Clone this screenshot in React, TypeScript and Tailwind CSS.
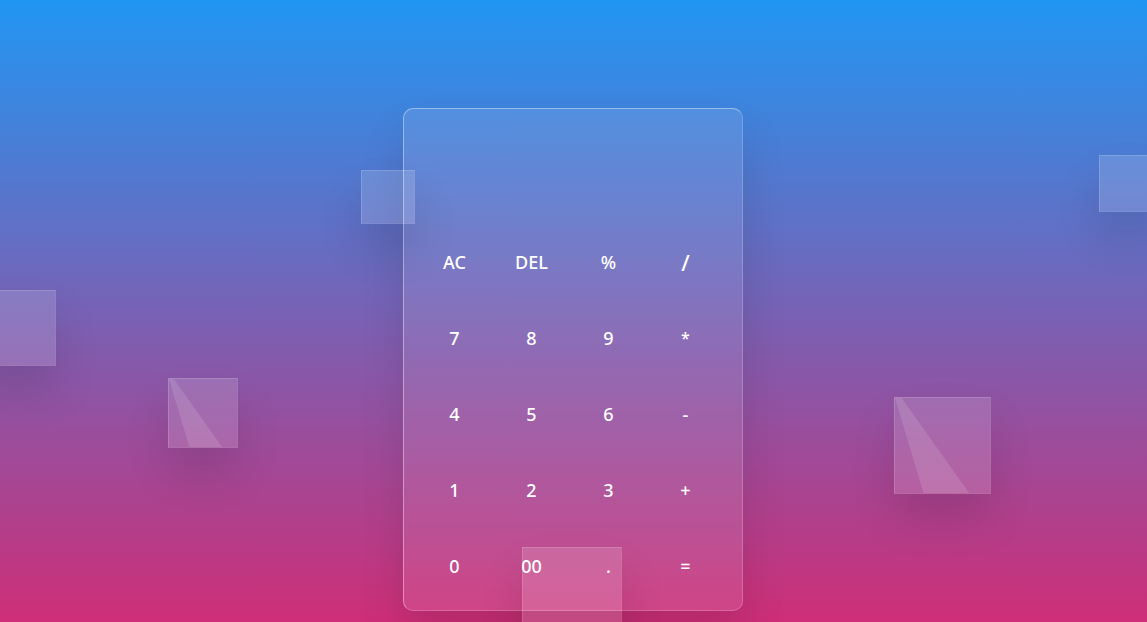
import React from "react";

type Square = {
  cls: string;
  shine?: boolean;
};

const squares: Square[] = [
  { cls: "left-[361px] top-[170px] w-[54px] h-[54px]" },
  { cls: "left-[-20px] top-[290px] w-[76px] h-[76px]" },
  { cls: "left-[168px] top-[378px] w-[70px] h-[70px]", shine: true },
  { cls: "left-[894px] top-[397px] w-[97px] h-[97px]", shine: true },
  { cls: "left-[1099px] top-[155px] w-[57px] h-[57px]" },
  { cls: "left-[522px] top-[547px] w-[100px] h-[100px]" },
];

const keys = [
  "AC", "DEL", "%", "/",
  "7", "8", "9", "*",
  "4", "5", "6", "-",
  "1", "2", "3", "+",
  "0", "00", ".", "=",
];

function GlassSquare({ cls, shine }: Square) {
  return (
    <div
      className={`absolute ${cls} bg-white/15 border-t border-l border-white/15 border-r border-b border-r-white/5 border-b-white/5 shadow-[0_25px_45px_rgba(0,0,0,0.12)] overflow-hidden`}
    >
      {shine && (
        <svg className="absolute inset-0 w-full h-full" viewBox="0 0 100 100" preserveAspectRatio="none">
          <polygon points="0,0 7,0 78,100 30,100" fill="rgba(255,255,255,0.12)" />
        </svg>
      )}
    </div>
  );
}

export default function App() {
  return (
    <div
      className="relative h-[622px] overflow-hidden bg-[linear-gradient(180deg,#2196f3_0%,#ce2e77_100%)]"
      style={{ fontFamily: '"Noto Sans", "Open Sans", sans-serif' }}
    >
      <div className="flex justify-center pt-[108px]">
        <div className="w-[340px] h-[503px] mr-[1px] rounded-[10px] bg-white/10 border border-white/40 border-r-white/20 border-b-white/20 shadow-[0_25px_45px_rgba(0,0,0,0.12)] flex flex-col">
          {/* display */}
          <div className="h-[115px] shrink-0" />
          <div className="grid grid-cols-[repeat(4,77px)] auto-rows-[76px] pl-[12px]">
            {keys.map((k) => (
              <button
                key={k}
                className={`flex items-center justify-center text-white font-medium ${
                  k === "/" ? "text-[22px]" : k === "*" ? "text-[16px]" : "text-[18px]"
                }`}
              >
                {k}
              </button>
            ))}
          </div>
        </div>
      </div>
      {squares.map((s, i) => (
        <GlassSquare key={i} {...s} />
      ))}
    </div>
  );
}
